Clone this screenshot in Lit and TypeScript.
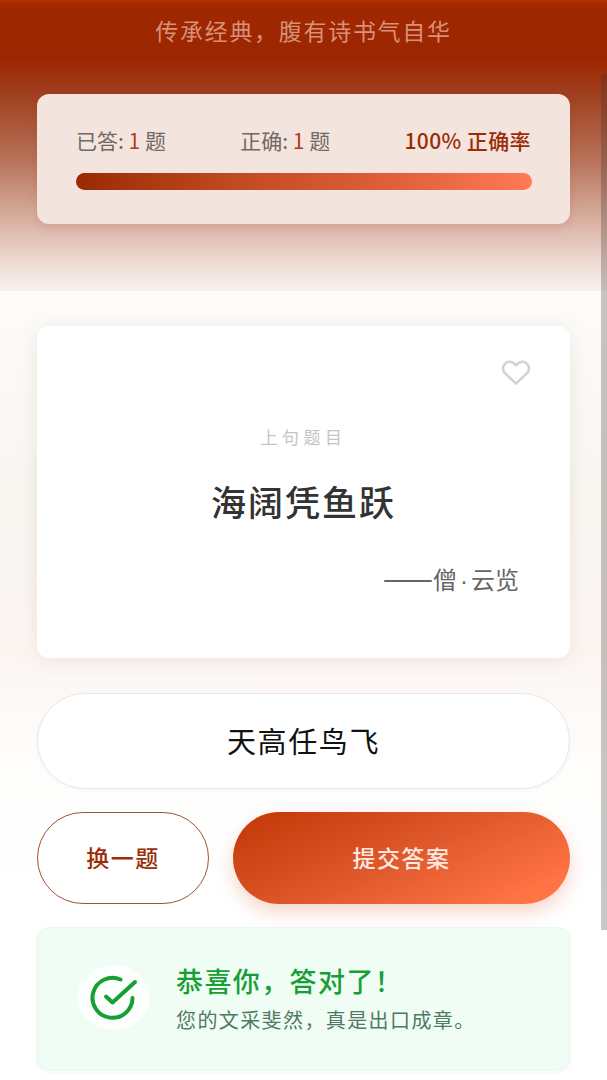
import { LitElement, html, css } from "lit";
import { customElement } from "lit/decorators.js";

@customElement("app-root")
export class AppRoot extends LitElement {
  static styles = css`
    :host {
      display: block;
      position: relative;
      width: 607px;
      height: 1080px;
      overflow: hidden;
      font-family: "Noto Sans CJK SC", "Noto Sans", sans-serif;
      background: linear-gradient(180deg, #fdfcfa 291px, #f9f6f2 480px, #fcf6f3 660px, #fefdfc 760px, #ffffff 900px);
    }
    .header {
      height: 291px;
      box-sizing: border-box;
      padding: 13px 37px 0;
      background: linear-gradient(180deg, #b53000 0, #a02800 5px, #9b2600 58px, #a04020 95px, #b8735a 160px, #dcb5a7 225px, #f0ddd6 265px, #faf1ee 291px);
    }
    .tagline {
      margin: 0;
      height: 34px;
      line-height: 34px;
      text-align: center;
      font-size: 23px;
      letter-spacing: 1.7px;
      color: #d9907a;
    }
    .stats {
      margin-top: 47px;
      height: 130px;
      box-sizing: border-box;
      padding: 31px 39px 0;
      border-radius: 12px;
      background: #f4e4de;
      box-shadow: 0 3px 10px rgba(120, 50, 20, 0.12);
    }
    .stats-row {
      display: flex;
      justify-content: space-between;
      height: 30px;
      line-height: 30px;
      font-size: 21px;
      color: #6f6a67;
    }
    .stats-row b {
      font-weight: 400;
      color: #b23a1a;
    }
    .rate {
      color: #9c2c08;
      font-weight: 500;
      letter-spacing: 0.4px;
    }
    .bar {
      margin: 18px -1px 0 0;
      height: 17px;
      border-radius: 9px;
      background: linear-gradient(90deg, #9a2a04, #c24a20 35%, #e0603a 70%, #ff7a55);
    }
    .content {
      padding: 35px 37px 0;
      display: flex;
      flex-direction: column;
    }
    .question {
      position: relative;
      height: 332px;
      box-sizing: border-box;
      padding-top: 97px;
      border-radius: 12px;
      background: #fff;
      box-shadow: 0 2px 20px rgba(110, 70, 40, 0.11);
      text-align: center;
    }
    .heart {
      position: absolute;
      top: 34px;
      right: 39px;
      width: 30px;
      height: 26px;
      display: block;
    }
    .label {
      height: 28px;
      line-height: 28px;
      font-size: 17px;
      letter-spacing: 4.5px;
      color: #c4c4c4;
    }
    .poem {
      margin-top: 25px;
      height: 50px;
      line-height: 50px;
      font-size: 35px;
      font-weight: 500;
      letter-spacing: 2px;
      color: #333;
    }
    .author {
      margin-top: 34px;
      padding-right: 51px;
      text-align: right;
      height: 32px;
      line-height: 32px;
      font-size: 24px;
      color: #666;
    }
    .author .dash {
      font-size: 30px;
    }
    .author .dot {
      font-family: "Liberation Sans", sans-serif;
      margin: 0 3px;
    }
    .answer {
      margin-top: 35px;
      height: 96px;
      box-sizing: border-box;
      padding-bottom: 3px;
      border: 1px solid #ebe8e6;
      border-radius: 48px;
      background: #fff;
      box-shadow: 0 1px 4px rgba(0, 0, 0, 0.04);
      display: flex;
      align-items: center;
      justify-content: center;
      font-size: 29px;
      letter-spacing: 1.6px;
      color: #111;
    }
    .actions {
      margin-top: 23px;
      display: flex;
      gap: 24px;
    }
    .btn {
      height: 92px;
      border-radius: 46px;
      box-sizing: border-box;
      padding-bottom: 3px;
      display: flex;
      align-items: center;
      justify-content: center;
      font-size: 23px;
      letter-spacing: 1.5px;
    }
    .skip {
      width: 172px;
      border: 1px solid #a4512f;
      background: #fff;
      color: #9c2e08;
      font-weight: 500;
    }
    .submit {
      flex: 1;
      color: #fbe9e1;
      font-weight: 500;
      background: linear-gradient(155deg, #c63c0c 8%, #e0592c 50%, #ff7344 88%);
      box-shadow: 0 8px 18px rgba(220, 90, 40, 0.25);
    }
    .result {
      margin-top: 23px;
      height: 143px;
      box-sizing: border-box;
      padding: 0 39px 2px;
      display: flex;
      align-items: center;
      gap: 26px;
      border-radius: 12px;
      border: 1px solid #e9f8ee;
      background: #f0fdf4;
      box-shadow: 0 2px 4px rgba(20, 120, 60, 0.06);
    }
    .badge {
      width: 73px;
      height: 65px;
      border-radius: 50%;
      background: #fcfffd;
      display: flex;
      align-items: center;
      justify-content: center;
      flex: none;
    }
    .badge svg {
      display: block;
    }
    .result-title {
      height: 38px;
      line-height: 38px;
      font-size: 27px;
      letter-spacing: 1.4px;
      font-weight: 500;
      color: #16a034;
    }
    .result-text {
      margin-top: 6px;
      height: 28px;
      line-height: 28px;
      font-size: 20px;
      letter-spacing: 1.4px;
      color: #4f7a62;
    }
    .scrollbar {
      position: absolute;
      top: 75px;
      right: 0;
      width: 6px;
      height: 855px;
      background: rgba(60, 50, 45, 0.28);
    }
  `;

  render() {
    return html`
      <section class="header">
        <p class="tagline">传承经典，腹有诗书气自华</p>
        <div class="stats">
          <div class="stats-row">
            <span>已答: <b>1</b> 题</span>
            <span>正确: <b>1</b> 题</span>
            <span class="rate">100% 正确率</span>
          </div>
          <div class="bar"></div>
        </div>
      </section>
      <section class="content">
        <div class="question">
          <svg class="heart" viewBox="0 0 32 28" fill="none" stroke="#d2d2d2" stroke-width="2.8" stroke-linejoin="round">
            <path d="M16 25.5 4.2 14.2C.8 10.8 1.6 5.6 5 3.2c3.6-2.4 8.4-1.2 11 2.6 2.6-3.8 7.4-5 11-2.6 3.4 2.4 4.2 7.6.8 11z" />
          </svg>
          <div class="label">上句题目</div>
          <div class="poem">海阔凭鱼跃</div>
          <div class="author"><span class="dash">——</span>僧<span class="dot">·</span>云览</div>
        </div>
        <div class="answer">天高任鸟飞</div>
        <div class="actions">
          <div class="btn skip">换一题</div>
          <div class="btn submit">提交答案</div>
        </div>
        <div class="result">
          <div class="badge">
            <svg width="50" height="46" viewBox="0 0 50 46" fill="none" stroke="#16a034" stroke-width="4" stroke-linecap="round" stroke-linejoin="round">
              <path d="M31.5 4.5A20 20 0 1 0 43.5 23" />
              <path d="M17 21.5 23.5 27.5 46 7" />
            </svg>
          </div>
          <div>
            <div class="result-title">恭喜你，答对了！</div>
            <div class="result-text">您的文采斐然，真是出口成章。</div>
          </div>
        </div>
      </section>
      <div class="scrollbar"></div>
    `;
  }
}
